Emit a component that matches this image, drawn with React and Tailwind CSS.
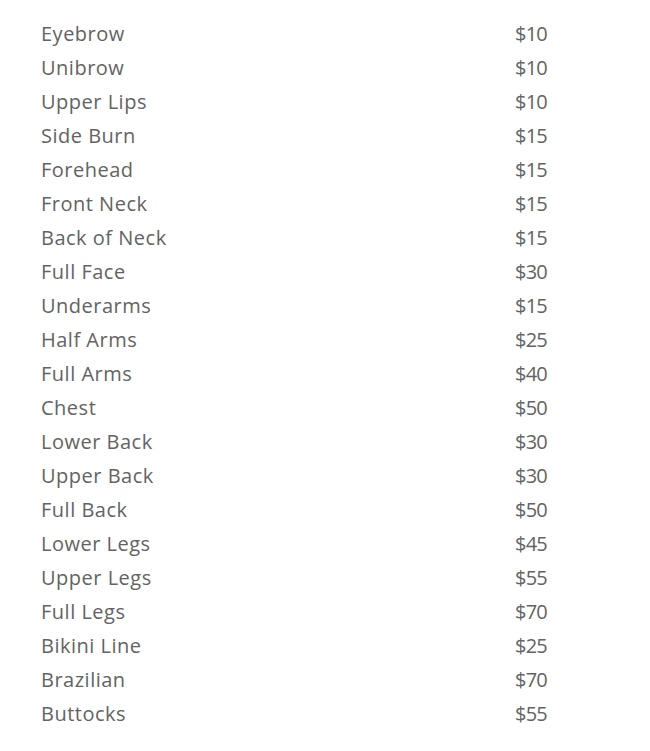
const items = [
  ["Eyebrow", "$10"],
  ["Unibrow", "$10"],
  ["Upper Lips", "$10"],
  ["Side Burn", "$15"],
  ["Forehead", "$15"],
  ["Front Neck", "$15"],
  ["Back of Neck", "$15"],
  ["Full Face", "$30"],
  ["Underarms", "$15"],
  ["Half Arms", "$25"],
  ["Full Arms", "$40"],
  ["Chest", "$50"],
  ["Lower Back", "$30"],
  ["Upper Back", "$30"],
  ["Full Back", "$50"],
  ["Lower Legs", "$45"],
  ["Upper Legs", "$55"],
  ["Full Legs", "$70"],
  ["Bikini Line", "$25"],
  ["Brazilian", "$70"],
  ["Buttocks", "$55"],
];

export default function App() {
  return (
    <div
      className="w-[650px] h-[751px] bg-white pt-[17px] pl-[41px] text-[#636363]"
      style={{ fontFamily: '"Open Sans", "Liberation Sans", sans-serif' }}
    >
      {items.map(([name, price]) => (
        <div key={name} className="flex h-[34px] items-center text-[20px] font-medium">
          <span className="w-[474px] tracking-[0.5px]">{name}</span>
          <span className="tracking-[-0.8px]">{price}</span>
        </div>
      ))}
    </div>
  );
}
